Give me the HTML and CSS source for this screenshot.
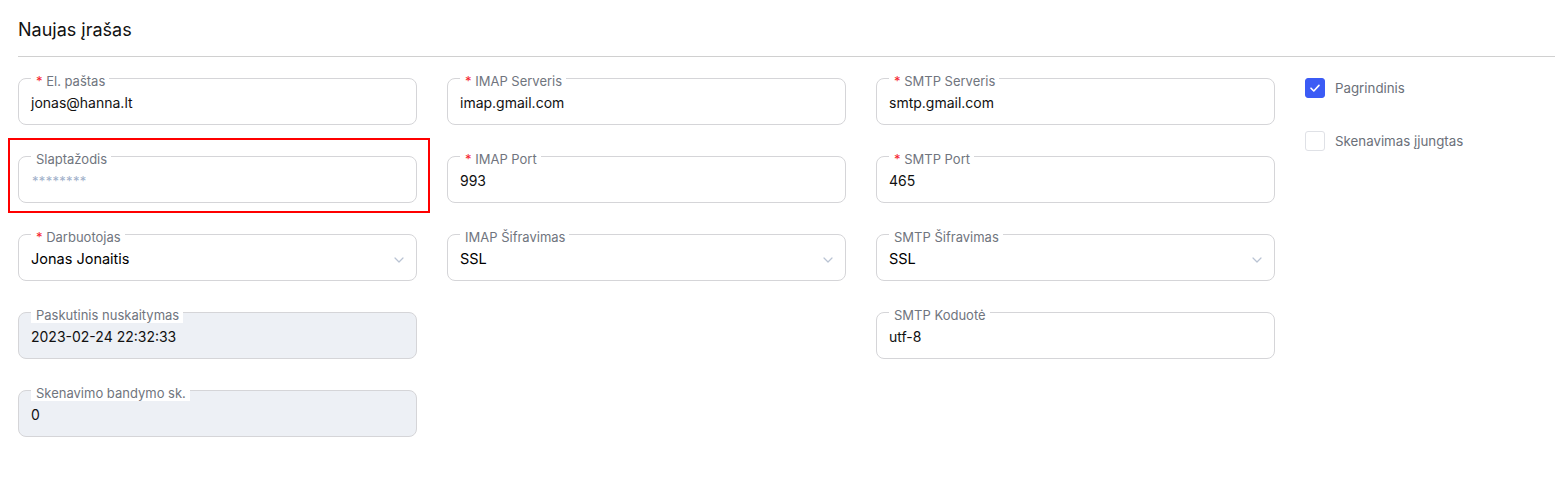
FILE: index.html
```html
<!DOCTYPE html>
<html lang="lt">
<head>
<meta charset="utf-8">
<title>Naujas įrašas</title>
<link rel="stylesheet" href="styles.css">
</head>
<body>
<div class="page">
  <header class="header">
    <h1 class="title">Naujas įrašas</h1>
  </header>
  <hr class="divider">
  <form class="form">
    <div class="field c1 r1">
      <span class="label"><span class="req">*</span> El. paštas</span>
      <span class="value">jonas@hanna.lt</span>
    </div>
    <div class="field c2 r1">
      <span class="label"><span class="req">*</span> IMAP Serveris</span>
      <span class="value">imap.gmail.com</span>
    </div>
    <div class="field c3 r1">
      <span class="label"><span class="req">*</span> SMTP Serveris</span>
      <span class="value">smtp.gmail.com</span>
    </div>

    <div class="checks">
      <label class="check">
        <span class="box checked">
          <svg width="12" height="10" viewBox="0 0 12 10"><path d="M2 5.2 L4.8 8 L10 2.4" fill="none" stroke="#fff" stroke-width="1.6" stroke-linecap="round" stroke-linejoin="round"/></svg>
        </span>
        <span class="check-text">Pagrindinis</span>
      </label>
      <label class="check">
        <span class="box"></span>
        <span class="check-text">Skenavimas įjungtas</span>
      </label>
    </div>

    <div class="field c1 r2">
      <span class="label">Slaptažodis</span>
      <span class="value placeholder">********</span>
      <div class="highlight"></div>
    </div>
    <div class="field c2 r2">
      <span class="label"><span class="req">*</span> IMAP Port</span>
      <span class="value">993</span>
    </div>
    <div class="field c3 r2">
      <span class="label"><span class="req">*</span> SMTP Port</span>
      <span class="value">465</span>
    </div>

    <div class="field select c1 r3">
      <span class="label"><span class="req">*</span> Darbuotojas</span>
      <span class="value strong">Jonas Jonaitis</span>
      <svg class="chev" width="10" height="6" viewBox="0 0 10 6"><path d="M1 1 L5 5 L9 1" fill="none" stroke="#b9c3d3" stroke-width="1.2" stroke-linecap="round" stroke-linejoin="round"/></svg>
    </div>
    <div class="field select c2 r3">
      <span class="label">IMAP Šifravimas</span>
      <span class="value strong">SSL</span>
      <svg class="chev" width="10" height="6" viewBox="0 0 10 6"><path d="M1 1 L5 5 L9 1" fill="none" stroke="#b9c3d3" stroke-width="1.2" stroke-linecap="round" stroke-linejoin="round"/></svg>
    </div>
    <div class="field select c3 r3">
      <span class="label">SMTP Šifravimas</span>
      <span class="value strong">SSL</span>
      <svg class="chev" width="10" height="6" viewBox="0 0 10 6"><path d="M1 1 L5 5 L9 1" fill="none" stroke="#b9c3d3" stroke-width="1.2" stroke-linecap="round" stroke-linejoin="round"/></svg>
    </div>

    <div class="field disabled c1 r4">
      <span class="label">Paskutinis nuskaitymas</span>
      <span class="value">2023-02-24 22:32:33</span>
    </div>
    <div class="field c3 r4">
      <span class="label">SMTP Koduotė</span>
      <span class="value">utf-8</span>
    </div>

    <div class="field disabled c1 r5">
      <span class="label">Skenavimo bandymo sk.</span>
      <span class="value">0</span>
    </div>
  </form>
</div>
</body>
</html>
```

FILE: styles.css
```css
* { box-sizing: border-box; }

html, body {
  margin: 0;
  padding: 0;
  background: #ffffff;
}

body {
  font-family: Inter, "Noto Sans", "Liberation Sans", sans-serif;
  color: #111827;
}

.page {
  padding-left: 18px;
}

.header {
  padding-top: 19px;
  height: 56px;
}

.title {
  margin: 0;
  font-size: 18px;
  line-height: 22px;
  font-weight: 400;
  color: #111111;
}

.divider {
  margin: 0;
  border: 0;
  height: 1px;
  background: #d0d0d0;
}

.form {
  margin-top: 21px;
  display: grid;
  grid-template-columns: 399px 399px 399px auto;
  grid-template-rows: repeat(5, 47px);
  column-gap: 30px;
  row-gap: 31px;
}

.c1 { grid-column: 1; }
.c2 { grid-column: 2; }
.c3 { grid-column: 3; }
.r1 { grid-row: 1; }
.r2 { grid-row: 2; }
.r3 { grid-row: 3; }
.r4 { grid-row: 4; }
.r5 { grid-row: 5; }

.field {
  position: relative;
  height: 47px;
  border: 1px solid #d5d5d8;
  border-radius: 8px;
  background: #ffffff;
  display: flex;
  align-items: center;
  padding: 2px 12px 0 12px;
}

.field.disabled {
  background: #edf0f5;
}

.label {
  position: absolute;
  top: -4px;
  left: 12px;
  padding: 0 4px 0 5px;
  background: #ffffff;
  font-size: 13px;
  line-height: 13px;
  height: 14px;
  color: #70757e;
  white-space: nowrap;
}

.req {
  color: #f5222d;
}

.value {
  font-size: 14px;
  line-height: 20px;
  color: #111111;
  white-space: nowrap;
}

.value.placeholder {
  color: #9fb0ca;
  font-size: 13px;
  letter-spacing: 0.3px;
  padding-left: 1px;
}

.value.strong {
  color: #000000;
  font-weight: 400;
  font-size: 14.5px;
}

.chev {
  position: absolute;
  right: 12px;
  top: 22px;
}

.highlight {
  position: absolute;
  left: -11px;
  right: -14px;
  top: -19px;
  bottom: -11px;
  border: 2px solid #ff0000;
  pointer-events: none;
}

.checks {
  grid-column: 4;
  grid-row: 1 / span 2;
  display: flex;
  flex-direction: column;
  gap: 33px;
}

.check {
  display: flex;
  align-items: center;
  gap: 10px;
  height: 20px;
}

.box {
  width: 20px;
  height: 20px;
  border: 1px solid #dfe1e6;
  border-radius: 3px;
  background: #ffffff;
  display: flex;
  align-items: center;
  justify-content: center;
}

.box.checked {
  background: #3b5bf5;
  border-color: #3b5bf5;
}

.check-text {
  font-size: 13.3px;
  color: #6b7079;
  line-height: 18px;
}
```
